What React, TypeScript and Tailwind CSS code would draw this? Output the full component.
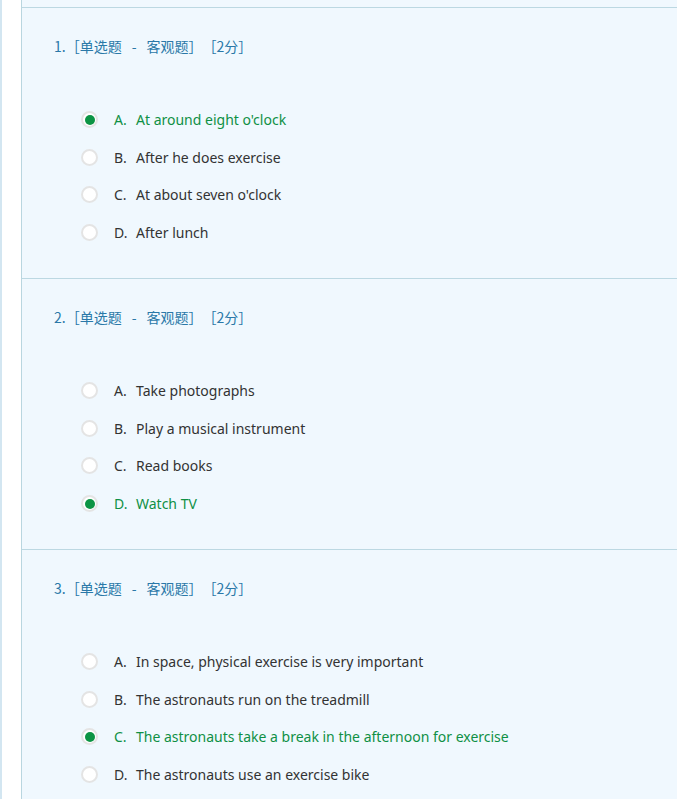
const questions = [
  {
    no: 1,
    answer: "A",
    options: [
      ["A", "At around eight o'clock"],
      ["B", "After he does exercise"],
      ["C", "At about seven o'clock"],
      ["D", "After lunch"],
    ],
  },
  {
    no: 2,
    answer: "D",
    options: [
      ["A", "Take photographs"],
      ["B", "Play a musical instrument"],
      ["C", "Read books"],
      ["D", "Watch TV"],
    ],
  },
  {
    no: 3,
    answer: "C",
    options: [
      ["A", "In space, physical exercise is very important"],
      ["B", "The astronauts run on the treadmill"],
      ["C", "The astronauts take a break in the afternoon for exercise"],
      ["D", "The astronauts use an exercise bike"],
    ],
  },
];

function Radio({ checked }: { checked: boolean }) {
  return (
    <span className="flex h-[17px] w-[17px] items-center justify-center rounded-full border-2 border-[#e4e4e4] bg-white">
      {checked && <span className="h-[10px] w-[10px] rounded-full bg-[#0c9444]" />}
    </span>
  );
}

export default function App() {
  return (
    <div
      className="flex min-h-[799px] w-[677px] overflow-hidden bg-white"
      style={{ fontFamily: '"Noto Sans", "Noto Sans CJK SC", sans-serif' }}
    >
      <div className="w-[2px] shrink-0 bg-[#d3e6f1]" />
      <div className="w-[19px] shrink-0 bg-white" />
      <div className="flex-1 border-l border-[#b9d6e0] bg-[#f0f8fe] pt-[7px]">
        {questions.map((q) => (
          <div key={q.no} className="h-[271px] border-t border-[#bcd8e2]">
            <div
              className="pl-[32px] pt-[28px] text-[14px] leading-[20px] text-[#2a78a8] [text-spacing-trim:space-all]"
              style={{ fontFamily: '"Noto Sans CJK SC", sans-serif' }}
            >
              {q.no}.［单选题<span className="mx-[10px]">-</span>客观题］［2分］
            </div>
            <div className="mt-[45px] flex flex-col">
              {q.options.map(([k, t]) => {
                const sel = k === q.answer;
                return (
                  <div key={k} className="flex h-[37.6px] items-center">
                    <div className="ml-[59px]">
                      <Radio checked={sel} />
                    </div>
                    <span
                      className={`ml-[16px] w-[22px] text-[14px] ${sel ? "text-[#0f9045]" : "text-[#333333]"}`}
                    >
                      {k}.
                    </span>
                    <span className={`text-[14px] ${sel ? "text-[#0f9045]" : "text-[#333333]"}`}>{t}</span>
                  </div>
                );
              })}
            </div>
          </div>
        ))}
      </div>
    </div>
  );
}
